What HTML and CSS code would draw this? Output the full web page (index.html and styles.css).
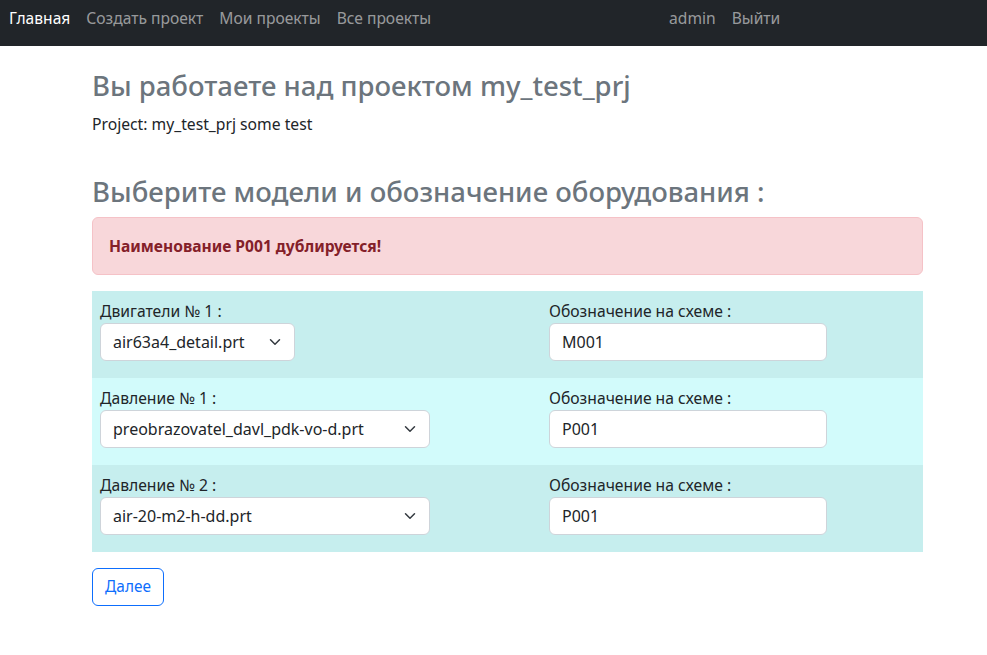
FILE: index.html
```html
<!DOCTYPE html>
<html lang="ru">
<head>
<meta charset="utf-8">
<title>Проект</title>
<link rel="stylesheet" href="styles.css">
</head>
<body>
<nav class="navbar">
  <ul class="nav">
    <li><a class="nav-link active" href="#">Главная</a></li>
    <li><a class="nav-link" href="#">Создать проект</a></li>
    <li><a class="nav-link" href="#">Мои проекты</a></li>
    <li><a class="nav-link" href="#">Все проекты</a></li>
  </ul>
  <ul class="nav nav-right">
    <li><a class="nav-link" href="#">admin</a></li>
    <li><a class="nav-link" href="#">Выйти</a></li>
  </ul>
</nav>
<main class="content">
  <h2 class="title">Вы работаете над проектом my_test_prj</h2>
  <p class="project">Project: my_test_prj some test</p>
  <h2 class="title title-second">Выберите модели и обозначение оборудования :</h2>
  <div class="alert">Наименование P001 дублируется!</div>
  <form class="equip">
    <div class="row row-a">
      <div class="cell">
        <label class="label">Двигатели № 1 :</label>
        <span class="select-wrap">
          <select class="form-select narrow"><option>air63a4_detail.prt</option></select>
          <svg class="chev" viewBox="0 0 16 16" width="16" height="12"><path d="m2 5 6 6 6-6" fill="none" stroke="#343a40" stroke-width="2" stroke-linecap="round" stroke-linejoin="round"/></svg>
        </span>
      </div>
      <div class="cell">
        <label class="label">Обозначение на схеме :</label>
        <input class="form-control" type="text" value="M001">
      </div>
    </div>
    <div class="row row-b">
      <div class="cell">
        <label class="label">Давление № 1 :</label>
        <span class="select-wrap">
          <select class="form-select"><option>preobrazovatel_davl_pdk-vo-d.prt</option></select>
          <svg class="chev" viewBox="0 0 16 16" width="16" height="12"><path d="m2 5 6 6 6-6" fill="none" stroke="#343a40" stroke-width="2" stroke-linecap="round" stroke-linejoin="round"/></svg>
        </span>
      </div>
      <div class="cell">
        <label class="label">Обозначение на схеме :</label>
        <input class="form-control" type="text" value="P001">
      </div>
    </div>
    <div class="row row-a">
      <div class="cell">
        <label class="label">Давление № 2 :</label>
        <span class="select-wrap">
          <select class="form-select"><option>air-20-m2-h-dd.prt</option></select>
          <svg class="chev" viewBox="0 0 16 16" width="16" height="12"><path d="m2 5 6 6 6-6" fill="none" stroke="#343a40" stroke-width="2" stroke-linecap="round" stroke-linejoin="round"/></svg>
        </span>
      </div>
      <div class="cell">
        <label class="label">Обозначение на схеме :</label>
        <input class="form-control" type="text" value="P001">
      </div>
    </div>
  </form>
  <button class="btn" type="button">Далее</button>
</main>
</body>
</html>
```
FILE: styles.css
```css
* { box-sizing: border-box; }
html, body { margin: 0; padding: 0; }
body {
  font-family: "Noto Sans", "Open Sans", sans-serif;
  font-size: 16px;
  line-height: 24px;
  color: #212529;
  background: #fff;
}
.navbar {
  height: 46px;
  background: #212529;
  display: flex;
  align-items: flex-start;
  padding: 6px 0 0 1px;
}
.nav {
  list-style: none;
  margin: 0;
  padding: 0;
  display: flex;
}
.nav-right { margin-left: 222px; }
.nav-link {
  display: block;
  padding: 0 8px;
  color: rgba(255,255,255,.55);
  text-decoration: none;
  font-size: 15.6px;
  line-height: 24px;
}
.nav-link.active { color: #fff; }
.content {
  margin-left: 92px;
  width: 831px;
  padding-top: 22px;
}
.title {
  margin: 0;
  font-size: 27.5px;
  line-height: 36px;
  font-weight: 500;
  color: #6c757d;
}
.project {
  margin: 8px 0 0;
  font-size: 15.7px;
  line-height: 24px;
}
.title-second {
  margin-top: 38px;
  margin-bottom: 7px;
}
.alert {
  background: #f8d7da;
  border: 1px solid #f5c2c7;
  color: #842029;
  border-radius: 6px;
  padding: 16px;
  font-weight: 700;
  font-size: 15.6px;
  line-height: 24px;
  margin-bottom: 16px;
}
.equip { display: block; }
.row {
  display: grid;
  grid-template-columns: 449px 1fr;
}
.row-a { background: #c6eeee; }
.row-b { background: #d2fbfb; }
.cell {
  padding: 8px 8px 17px;
  display: flex;
  flex-direction: column;
  align-items: flex-start;
}
.label { display: block; line-height: 24px; font-size: 15.7px; }
.select-wrap {
  position: relative;
  display: inline-block;
}
.form-select {
  appearance: none;
  -webkit-appearance: none;
  font: inherit;
  color: #212529;
  background: #fff;
  border: 1px solid #ced4da;
  border-radius: 6px;
  height: 38px;
  width: 330px;
  padding: 6px 36px 6px 12px;
  line-height: 24px;
}
.form-select.narrow { width: 195px; }
.chev {
  position: absolute;
  right: 12px;
  top: 13px;
  pointer-events: none;
}
.form-control {
  font: inherit;
  color: #212529;
  background: #fff;
  border: 1px solid #ced4da;
  border-radius: 6px;
  height: 38px;
  width: 278px;
  padding: 6px 12px;
  line-height: 24px;
}
.btn {
  margin-top: 16px;
  font: inherit;
  font-size: 15.4px;
  color: #0d6efd;
  background: transparent;
  border: 1px solid #0d6efd;
  border-radius: 6px;
  height: 38px;
  width: 72px;
  padding: 6px 0;
  line-height: 24px;
  cursor: pointer;
}
```
